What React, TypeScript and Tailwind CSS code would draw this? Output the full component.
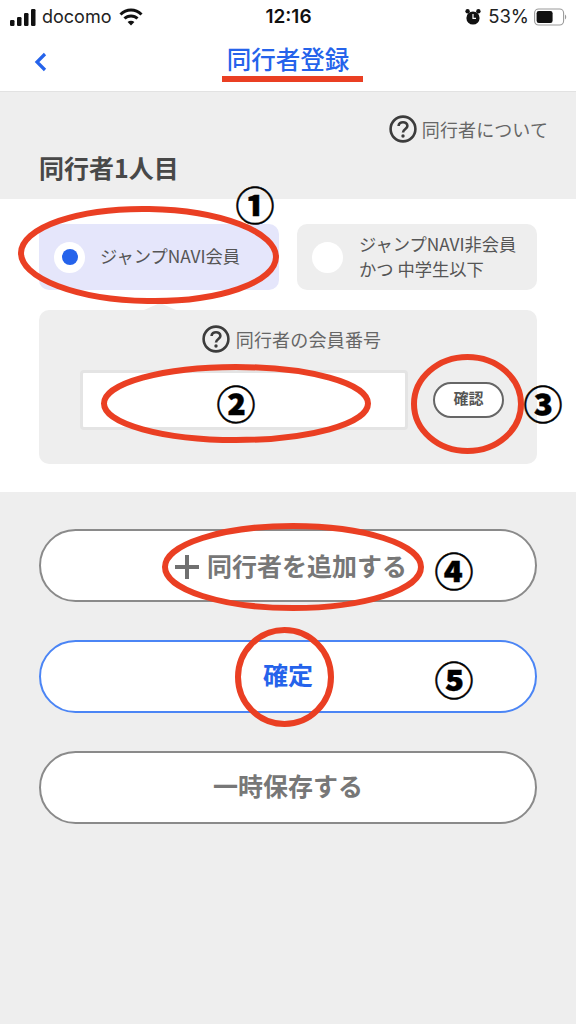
const cjk = { fontFamily: '"Noto Sans CJK JP", "Noto Sans", sans-serif' };

function HelpIcon({ size }: { size: number }) {
  return (
    <svg width={size} height={size} viewBox="0 0 28 28" className="shrink-0">
      <circle cx="14" cy="14" r="12.4" fill="none" stroke="#3c3c3c" strokeWidth="2.6" />
      <path d="M9.6 11 C9.6 5.9 18.4 5.9 18.4 11 C18.4 14 14 14 14 17.6" fill="none" stroke="#3c3c3c" strokeWidth="2.6" />
      <circle cx="14" cy="21" r="1.7" fill="#3c3c3c" />
    </svg>
  );
}

function Ring({ x, y, w, h, rotate = 0 }: { x: number; y: number; w: number; h: number; rotate?: number }) {
  const cx = x + w / 2;
  const cy = y + h / 2;
  return (
    <ellipse
      cx={cx}
      cy={cy}
      rx={w / 2 - 3}
      ry={h / 2 - 3}
      fill="none"
      stroke="#ea3f23"
      strokeWidth="6"
      transform={`rotate(${rotate} ${cx} ${cy})`}
    />
  );
}

function Num({ label, className }: { label: string; className: string }) {
  return (
    <span
      className={`absolute flex h-[40px] w-[40px] items-center justify-center text-[39px] font-black leading-none text-black [-webkit-text-stroke:0.4px_black] ${className}`}
      style={cjk}
    >
      {label}
    </span>
  );
}

function Pill({ children, blue }: { children: React.ReactNode; blue?: boolean }) {
  return (
    <button
      className={`flex h-[73px] w-full items-center justify-center rounded-full border-2 bg-white pb-[4px] text-[25px] font-bold ${
        blue ? 'border-[#4b85f5] text-[#2563eb]' : 'border-[#8a8a8a] text-[#777777]'
      }`}
      style={cjk}
    >
      {children}
    </button>
  );
}

export default function App() {
  return (
    <div className="relative h-[1024px] w-[576px] overflow-hidden bg-[#eeeeee]" style={cjk}>
      <header className="h-[92px] border-b border-[#e2e2e2] bg-white">
        <div className="flex h-[31px] items-center justify-between pl-[10px] pr-[9px] pt-[2px] text-[18px] text-[#222222]" style={{ fontFamily: 'Inter, sans-serif' }}>
          <div className="flex w-[180px] items-center gap-[6px]">
            <svg width="26" height="18" viewBox="0 0 26 18" fill="#111">
              <rect x="0" y="12" width="4.5" height="6" rx="1.2" />
              <rect x="7" y="9" width="4.5" height="9" rx="1.2" />
              <rect x="14" y="5" width="4.5" height="13" rx="1.2" />
              <rect x="21" y="1" width="4.5" height="17" rx="1.2" />
            </svg>
            <span className="text-[18px] leading-none">docomo</span>
            <svg width="24" height="18" viewBox="0 0 24 18" fill="none" stroke="#111" strokeWidth="3" className="ml-[2px]">
              <path d="M1.5 6.5 C7.5 0.5 16.5 0.5 22.5 6.5" />
              <path d="M5.5 10.5 C9 7 15 7 18.5 10.5" />
              <path d="M12 17.5 L8.6 14 C10.5 12.4 13.5 12.4 15.4 14 Z" fill="#111" stroke="none" />
            </svg>
          </div>
          <span className="text-[19px] font-semibold leading-none text-[#111111]">12:16</span>
          <div className="flex w-[180px] items-center justify-end gap-[7px]">
            <svg width="16" height="18" viewBox="0 0 16 18" fill="#111">
              <circle cx="8" cy="10" r="6.6" />
              <circle cx="2.6" cy="3.2" r="2.2" />
              <circle cx="13.4" cy="3.2" r="2.2" />
              <path d="M8 6 V10.4 H11" stroke="#fff" strokeWidth="1.2" fill="none" />
            </svg>
            <span className="mr-[-2px] text-[18.5px] leading-none">53%</span>
            <svg width="33" height="18" viewBox="0 0 33 18">
              <rect x="0.6" y="1" width="29" height="16" rx="4" fill="none" stroke="#9a9a9a" strokeWidth="1.1" />
              <rect x="2.6" y="3" width="16" height="12" rx="2.2" fill="#111" />
              <path d="M31 6.5 C32.6 7.2 32.6 10.8 31 11.5 Z" fill="#9a9a9a" />
            </svg>
          </div>
        </div>
        <div className="relative flex h-[60px] items-center justify-center">
          <svg width="14" height="20" viewBox="0 0 14 20" fill="none" stroke="#2563eb" strokeWidth="3.2" className="absolute left-[34px] top-[21px]">
            <path d="M11 2 L3 10 L11 18" />
          </svg>
          <h1 className="mt-[-3px] text-[24.5px] font-medium leading-none text-[#2563eb]">同行者登録</h1>
        </div>
      </header>

      <section className="h-[107px] px-[39px] pt-[23px]">
        <div className="mr-[-11px] flex h-[27px] items-center justify-end gap-[5px]">
          <HelpIcon size={28} />
          <span className="text-[18px] leading-none tracking-[0.1px] text-[#666666]">同行者について</span>
        </div>
        <h2 className="mt-[13px] text-[25px] font-bold leading-none text-[#484848]">同行者1人目</h2>
      </section>

      <section className="h-[293px] bg-white px-[39px] pt-[25px]">
        <div className="flex gap-[18px]">
          <div className="flex h-[66px] w-[240px] items-center rounded-[10px] bg-[#e5e6fb] pb-[3px] pl-[15px]">
            <span className="mt-[3px] flex h-[31px] w-[31px] items-center justify-center rounded-full bg-white">
              <span className="h-[16px] w-[16px] rounded-full bg-[#2563eb]" />
            </span>
            <span className="ml-[15px] text-[17.3px] leading-none text-[#555555]">ジャンプNAVI会員</span>
          </div>
          <div className="flex h-[66px] w-[240px] items-center rounded-[10px] bg-[#eeeeee] pb-[3px] pl-[15px]">
            <span className="mt-[3px] h-[31px] w-[31px] rounded-full bg-white" />
            <span className="ml-[16px] text-[17.3px] leading-[25px] text-[#555555]">
              ジャンプNAVI非会員
              <br />
              かつ 中学生以下
            </span>
          </div>
        </div>
        <div className="relative mt-[20px] h-[154px] rounded-[10px] bg-[#eeeeee]">
          <span className="absolute left-[105px] top-[-7px] h-0 w-0 border-x-[16px] border-b-[7px] border-x-transparent border-b-[#eeeeee]" />
          <div className="flex items-center justify-center gap-[6px] pl-[7px] pt-[15px]">
            <HelpIcon size={28} />
            <span className="text-[18px] leading-none tracking-[0.2px] text-[#666666]">同行者の会員番号</span>
          </div>
          <div className="mt-[17px] flex items-center">
            <div className="ml-[41px] h-[60px] w-[328px] rounded-[4px] border-[3px] border-[#e4e4e4] bg-white" />
            <button className="ml-[25px] flex h-[36px] w-[71px] items-center justify-center rounded-full border-2 border-[#666666] bg-white pb-[3px] text-[15px] font-bold text-[#555555]">
              確認
            </button>
          </div>
        </div>
      </section>

      <section className="flex flex-col gap-[38px] px-[39px] pt-[37px]">
        <Pill>
          <span className="ml-[6px] flex items-center gap-[8px] pt-[4px]">
            <svg width="24" height="24" viewBox="0 0 24 24" fill="#707070" className="mt-[2px]">
              <rect x="0" y="10" width="24" height="4" />
              <rect x="10" y="0" width="4" height="24" />
            </svg>
            同行者を追加する
          </span>
        </Pill>
        <Pill blue>確定</Pill>
        <Pill>一時保存する</Pill>
      </section>

      {/* hand-drawn annotations over the screenshot */}
      <svg className="pointer-events-none absolute left-0 top-0" width="576" height="1024">
        <rect x="222" y="76" width="141" height="6" fill="#ea3f23" />
        <Ring x={18} y={206} w={261} h={98} rotate={1} />
        <Ring x={101} y={364} w={270} h={79} />
        <Ring x={411} y={354} w={113} h={100} />
        <Ring x={162} y={523} w={262} h={88} />
        <Ring x={235} y={627} w={99} h={100} />
      </svg>
      <Num label="①" className="left-[235px] top-[183px]" />
      <Num label="②" className="left-[216px] top-[382px]" />
      <Num label="③" className="left-[523px] top-[382px]" />
      <Num label="④" className="left-[434px] top-[549px]" />
      <Num label="⑤" className="left-[434px] top-[658px]" />
    </div>
  );
}
